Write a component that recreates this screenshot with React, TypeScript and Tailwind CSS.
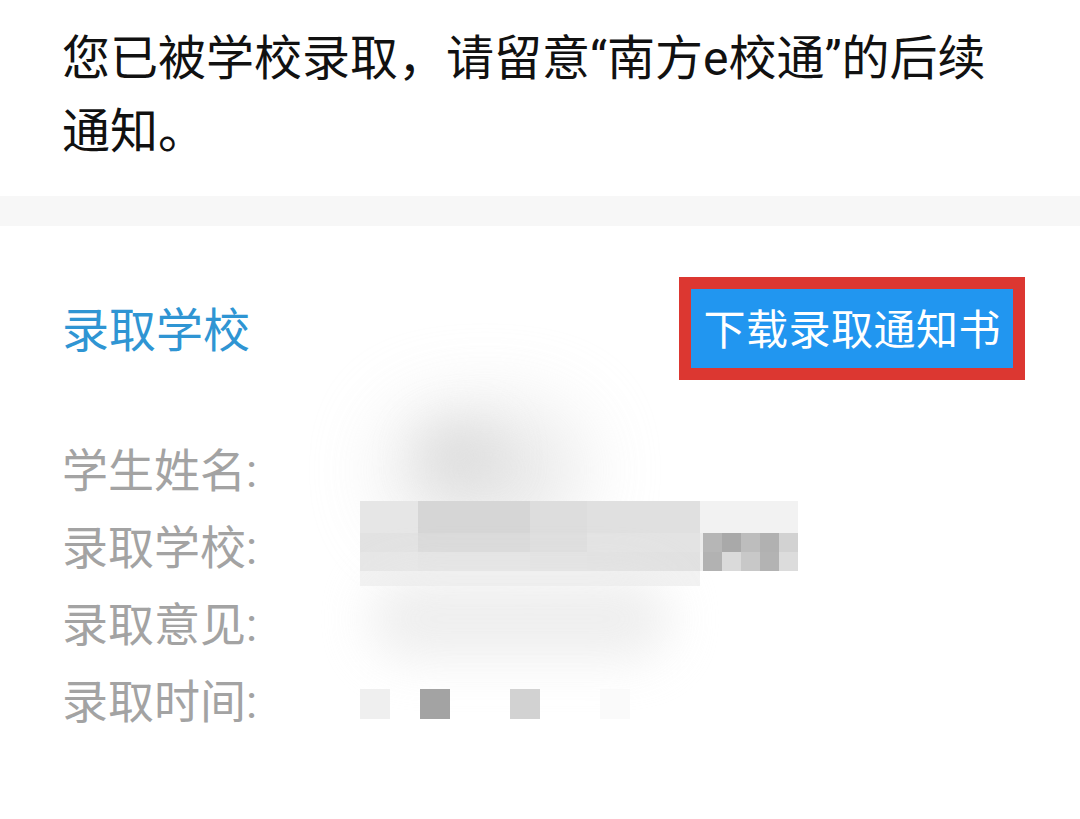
const cjk = { fontFamily: '"Noto Sans CJK SC", "Noto Sans", sans-serif' };
const mixed = { fontFamily: 'Roboto, "Noto Sans CJK SC", sans-serif' };

const schoolTop = [
  { w: "w-[58px]", c: "bg-[#e6e6e6]" },
  { w: "w-[112px]", c: "bg-[#d6d6d6]" },
  { w: "w-[57px]", c: "bg-[#dddddd]" },
  { w: "w-[113px]", c: "bg-[#e0e0e0]" },
];

const tailTop = ["bg-[#b6b6b6]", "bg-[#a9a9a9]", "bg-[#bdbdbd]", "bg-[#b1b1b1]", "bg-[#d2d2d2]"];
const tailBottom = ["bg-[#b2b2b2]", "bg-[#dadada]", "bg-[#c8c8c8]", "bg-[#b3b3b3]", "bg-[#dcdcdc]"];

function Row({ label, children }: { label: string; children?: React.ReactNode }) {
  return (
    <div className="flex h-[77px]">
      <div className="w-[298px] shrink-0 pt-[5px] text-[46px] leading-[72px] text-[#a3a3a3]" style={mixed}>
        {label}:
      </div>
      <div className="relative flex-1 h-full">{children}</div>
    </div>
  );
}

export default function App() {
  return (
    <div className="w-[1080px] h-[819px] bg-white overflow-hidden" style={cjk}>
      <p
        className="pl-[62px] pr-[80px] pt-[22px] text-[48px] leading-[73px] text-[#111111]"
        style={mixed}
      >
        您已被学校录取，请留意“南方e校通”的后续通知。
      </p>

      <div className="mt-[28px] h-[30px] bg-[#f7f7f7]" />

      <div className="mt-[51px] flex items-center justify-between pl-[62px] pr-[55px]">
        <div className="mb-[4px] text-[47px] leading-[60px] text-[#2f95d3]">录取学校</div>
        <div className="border-[12px] border-[#dc3731] bg-[#2196f0] px-[12px] h-[103px] flex items-center">
          <span className="mb-[4px] text-[42px] leading-none text-white tracking-[0.5px]">下载录取通知书</span>
        </div>
      </div>

      <div className="mt-[50px] pl-[62px]">
        <Row label="学生姓名">
          <div className="absolute left-[30px] top-[-20px] w-[190px] h-[120px] rounded-full bg-[#dedede] blur-2xl opacity-75" />
          <div className="absolute left-[60px] top-[-5px] w-[80px] h-[60px] rounded-full bg-[#d6d6d6] blur-xl opacity-60" />
        </Row>
        <Row label="录取学校">
          <div className="absolute left-0 top-[-6px] flex flex-col">
            <div className="flex h-[32px]">
              {schoolTop.map((b, i) => (
                <div key={i} className={`${b.w} ${b.c}`} />
              ))}
              <div className="w-[98px] bg-[#f2f2f2]" />
            </div>
            <div className="flex h-[19px]">
              <div className="w-[58px] bg-[#e2e2e2]" />
              <div className="w-[112px] bg-[#dadada]" />
              <div className="w-[57px] bg-[#dedede]" />
              <div className="w-[113px] bg-[#e3e3e3]" />
              <div className="w-[3px] bg-[#ececec]" />
              {tailTop.map((c, i) => (
                <div key={i} className={`w-[19px] ${c}`} />
              ))}
            </div>
            <div className="flex h-[19px]">
              <div className="w-[58px] bg-[#e6e6e6]" />
              <div className="w-[112px] bg-[#e4e4e4]" />
              <div className="w-[57px] bg-[#e2e2e2]" />
              <div className="w-[113px] bg-[#e1e1e1]" />
              <div className="w-[3px] bg-[#eeeeee]" />
              {tailBottom.map((c, i) => (
                <div key={i} className={`w-[19px] ${c}`} />
              ))}
            </div>
            <div className="flex h-[15px]">
              <div className="w-[340px] bg-[#f2f2f2]" />
            </div>
          </div>
        </Row>
        <Row label="录取意见">
          <div className="absolute left-[10px] top-[-5px] w-[300px] h-[80px] rounded-full bg-[#eaeaea] blur-xl opacity-80" />
        </Row>
        <Row label="录取时间">
          <div className="absolute left-0 top-[28px] flex">
            <div className="w-[30px] h-[30px] bg-[#efefef]" />
            <div className="ml-[30px] w-[30px] h-[30px] bg-[#a3a3a3]" />
            <div className="ml-[60px] w-[30px] h-[30px] bg-[#d2d2d2]" />
            <div className="ml-[60px] w-[30px] h-[30px] bg-[#fafafa]" />
          </div>
        </Row>
      </div>
    </div>
  );
}
